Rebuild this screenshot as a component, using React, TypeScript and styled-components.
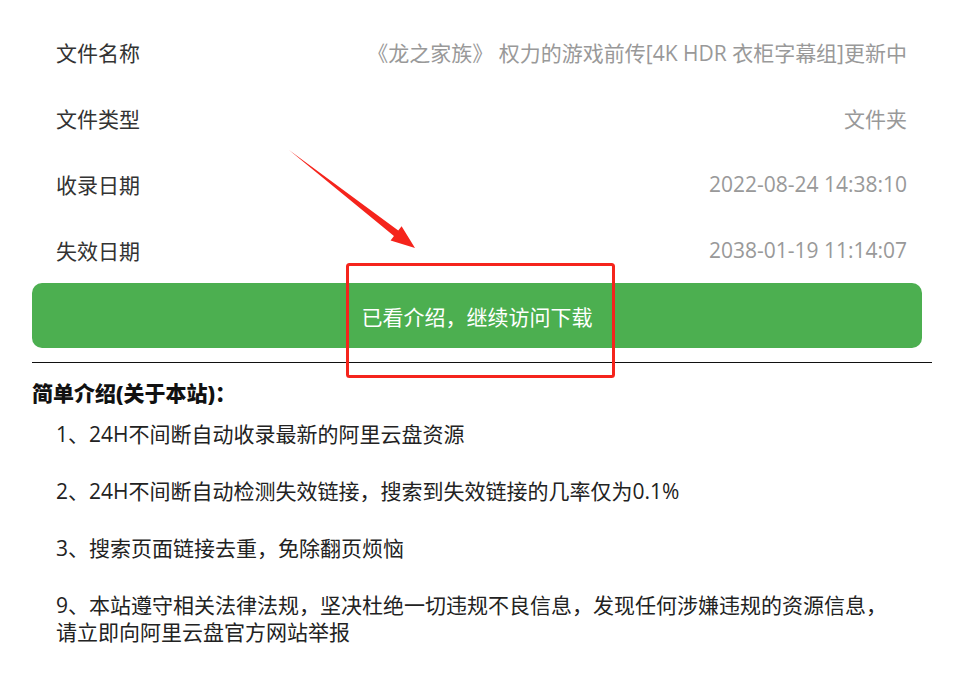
import React from "react";
import styled, { createGlobalStyle } from "styled-components";

const GlobalStyle = createGlobalStyle`
    html, body {
        margin: 0;
        padding: 0;
        background: #fff;
    }
    body {
        font-family: "Open Sans", "Noto Sans CJK SC", sans-serif;
        color: #333;
    }
`;

const info = [
    { label: "文件名称", value: "《龙之家族》 权力的游戏前传[4K HDR 衣柜字幕组]更新中" },
    { label: "文件类型", value: "文件夹" },
    { label: "收录日期", value: "2022-08-24 14:38:10" },
    { label: "失效日期", value: "2038-01-19 11:14:07" },
];

const intro = [
    "1、24H不间断自动收录最新的阿里云盘资源",
    "2、24H不间断自动检测失效链接，搜索到失效链接的几率仅为0.1%",
    "3、搜索页面链接去重，免除翻页烦恼",
];

const App: React.FC = () => {
    return (
        <Page>
            <GlobalStyle />
            <InfoList>
                {info.map((row) => (
                    <InfoRow key={row.label}>
                        <Label>{row.label}</Label>
                        <Value>{row.value}</Value>
                    </InfoRow>
                ))}
            </InfoList>
            <GoBtn>已看介绍，继续访问下载</GoBtn>
            <Divider />
            <Intro>
                <Title>简单介绍(关于本站)：</Title>
                {intro.map((line) => (
                    <Item key={line}>{line}</Item>
                ))}
                <Item>
                    9、本站遵守相关法律法规，坚决杜绝一切违规不良信息，发现任何涉嫌违规的资源信息，
                    <br />
                    请立即向阿里云盘官方网站举报
                </Item>
            </Intro>
            <Marks viewBox="0 0 980 680">
                <polygon
                    points="289,150 398.25,230.54 401.6,226.2 415,248 390.6,240.4 393.95,236.06"
                    fill="#f5241c"
                />
                <rect x="347.5" y="264.5" width="266" height="112" rx="2" fill="none" stroke="#f5241c" strokeWidth="3" />
            </Marks>
        </Page>
    );
};

const Marks = styled.svg`
    position: absolute;
    top: 0;
    left: 0;
    width: 980px;
    height: 680px;
    pointer-events: none;
`;

const Item = styled.p`
    margin: 0 0 30px;
    padding-left: 24px;
    font-size: 21px;
    line-height: 27px;
    color: #222;
`;

const Title = styled.h3`
    margin: 0 0 15px;
    font-size: 21px;
    font-weight: 800;
    line-height: 26px;
    color: #111;
`;

const Intro = styled.div`
    padding-top: 17px;
`;

const Divider = styled.hr`
    margin: 14px 0 0;
    border: none;
    border-top: 1px solid #111;
    height: 0;
`;

const GoBtn = styled.button`
    display: block;
    width: calc(100% - 10px);
    height: 65px;
    border: none;
    border-radius: 10px;
    background: #4caf50;
    color: #fff;
    font-family: inherit;
    font-size: 21px;
    cursor: pointer;
`;

const Value = styled.span`
    color: #999;
    text-align: right;
`;

const Label = styled.span`
    color: #333;
    flex-shrink: 0;
`;

const InfoRow = styled.div`
    display: flex;
    align-items: center;
    justify-content: space-between;
    height: 66px;
    padding: 0 25px 0 24px;
    font-size: 21px;
`;

const InfoList = styled.div`
    padding-top: 19px;
`;

const Page = styled.div`
    position: relative;
    width: 900px;
    padding: 0 48px 0 32px;
    height: 680px;
    overflow: hidden;
`;

export default App;
